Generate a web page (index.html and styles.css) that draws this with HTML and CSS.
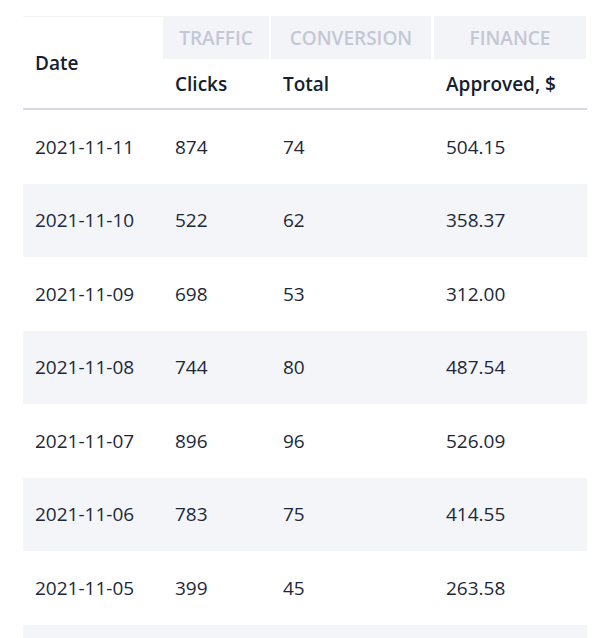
FILE: index.html
```html
<!DOCTYPE html>
<html>
<head>
<meta charset="utf-8">
<link rel="stylesheet" href="styles.css">
</head>
<body>
<table class="report">
  <colgroup>
    <col class="c-date">
    <col class="c-clicks">
    <col class="c-total">
    <col class="c-approved">
  </colgroup>
  <thead>
    <tr class="groups">
      <th class="date-head" rowspan="2">Date</th>
      <th class="group">Traffic</th>
      <th class="group">Conversion</th>
      <th class="group last">Finance</th>
    </tr>
    <tr class="metrics">
      <th>Clicks</th>
      <th>Total</th>
      <th>Approved, $</th>
    </tr>
  </thead>
  <tbody>
    <tr><td>2021-11-11</td><td>874</td><td>74</td><td>504.15</td></tr>
    <tr><td>2021-11-10</td><td>522</td><td>62</td><td>358.37</td></tr>
    <tr><td>2021-11-09</td><td>698</td><td>53</td><td>312.00</td></tr>
    <tr><td>2021-11-08</td><td>744</td><td>80</td><td>487.54</td></tr>
    <tr><td>2021-11-07</td><td>896</td><td>96</td><td>526.09</td></tr>
    <tr><td>2021-11-06</td><td>783</td><td>75</td><td>414.55</td></tr>
    <tr><td>2021-11-05</td><td>399</td><td>45</td><td>263.58</td></tr>
    <tr class="tail"><td></td><td></td><td></td><td></td></tr>
  </tbody>
</table>
</body>
</html>
```
FILE: styles.css
```css
html, body {
  margin: 0;
  padding: 0;
  background: #ffffff;
}
body {
  padding: 16px 6px 0 23px;
  font-family: "Open Sans", "Noto Sans", sans-serif;
  font-size: 19px;
  color: #1c2838;
  overflow: hidden;
  height: 638px;
  box-sizing: border-box;
}
.report {
  border-collapse: separate;
  border-spacing: 0;
  table-layout: fixed;
  width: 564px;
}
.c-date { width: 140px; }
.c-clicks { width: 108px; }
.c-total { width: 163px; }
.c-approved { width: 153px; }

.report th, .report td {
  padding: 0 0 0 12px;
  text-align: left;
  white-space: nowrap;
}
.date-head {
  font-weight: 600;
  color: #14202e;
  border-top: 1px solid #f3f4f8;
  border-bottom: 2px solid #d5d8e3;
  vertical-align: middle;
}
.groups .group {
  height: 43px;
  padding: 0;
  background: #f3f4f8;
  border-right: 2px solid #ffffff;
  text-align: center;
  text-transform: uppercase;
  font-size: 19px;
  font-weight: 600;
  color: #c4c7d5;
}
.groups .group:nth-child(3) {
  border-right-width: 3px;
}
.groups .group.last {
  border-right: 1px solid #ffffff;
}
.metrics th {
  height: 49px;
  font-weight: 600;
  color: #14202e;
  border-bottom: 2px solid #d5d8e3;
  vertical-align: middle;
}
.report tbody tr {
  height: 73.5px;
}
.report tbody td {
  vertical-align: middle;
}
.report tbody tr:nth-child(even) td {
  background: #f4f5f9;
}
```
